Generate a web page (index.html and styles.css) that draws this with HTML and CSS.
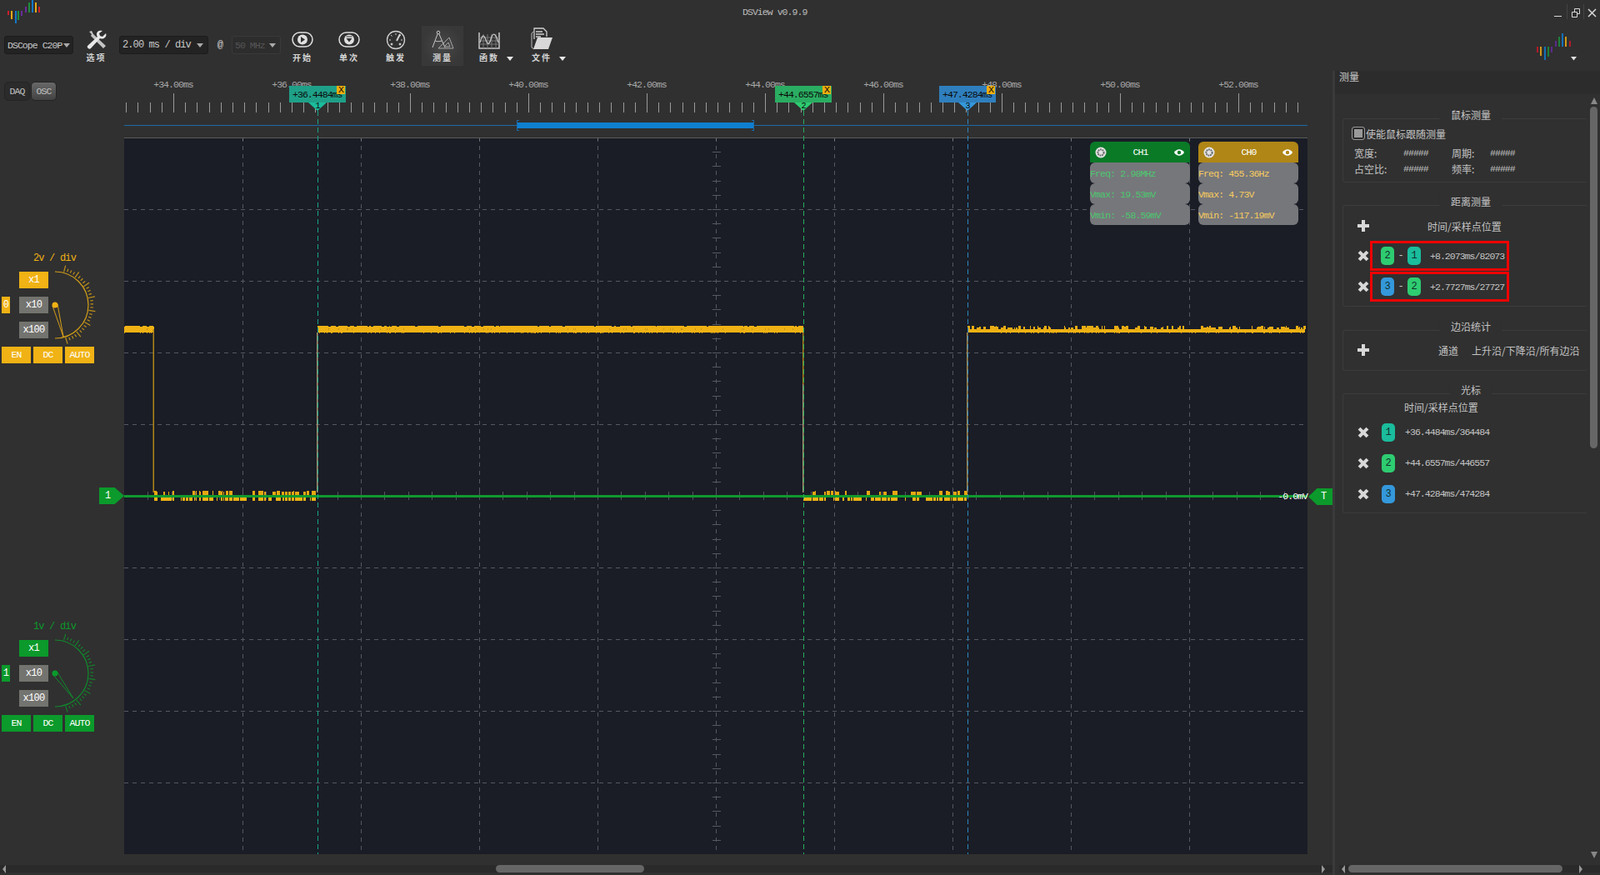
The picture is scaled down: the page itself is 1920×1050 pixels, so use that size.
FILE: index.html
```html
<!DOCTYPE html>
<html lang="zh-CN">
<head>
  <meta charset="UTF-8">
  <title>DSView v0.9.9</title>
  <link rel="stylesheet" href="styles.css">
</head>
<body>

  <div class="app">

    <!-- title bar -->
    <div class="titlebar">
      <svg class="logo-small" width="48" height="26" viewBox="0 0 48 26">
        <path stroke="#c8202c" d="M10 13v5M47 8v7"/><path stroke="#e8a818" d="M14 13v10M43 3v12"/>
        <path stroke="#1478c8" d="M19 13v15M39 0v15"/><path stroke="#1e8c3c" d="M22 13v11M35 3v12"/>
        <path stroke="#6a2c9c" d="M26 13v6M31 8v7"/>
      </svg>
      <div class="app-title">DSView v0.9.9</div>
      <div class="winbtns">
        <svg width="60" height="26" viewBox="0 0 60 26" fill="none" stroke="#d8d8d8">
          <path d="M5 19.5h9"/>
          <path stroke="#444" d="M20.5 5v18M40.5 5v18"/>
          <path d="M26.5 14.5h6v6h-6zM29.5 14v-3.500h6v6h-2.500"/>
          <path stroke-width="1.500" d="M46 11l9 9M55 11l-9 9"/>
        </svg>
      </div>
    </div>

    <!-- toolbar -->
    <div class="toolbar">
      <div class="combo combo-device">DSCope C20P<span class="caret"></span></div>

      <div class="tool tool-options">
        <svg width="26" height="24" viewBox="0 0 26 24">
          <path d="M4 2l3 3-1 2 15 15 3-3L9 5 7 1z" fill="#c4c4c4"/>
          <path d="M24 4l-4 4-3-1-1-3 4-3c-3-1-7 0-7 4 0 1 0 2 1 3L2 19c-1 2 2 5 4 3L17 10c4 2 9-2 7-6z" fill="#e8e8e8"/>
        </svg>
        <span class="tool-label">选项</span>
      </div>

      <div class="combo combo-time">2.00 ms / div<span class="caret"></span></div>
      <div class="at-sign">@</div>
      <div class="combo combo-rate">50 MHz<span class="caret"></span></div>

      <div class="tool tool-first">
        <svg width="26" height="24" viewBox="0 0 26 24" fill="none">
          <rect x="1" y="3" width="24" height="17" rx="8.500" stroke="#e0e0e0" stroke-width="1.500"/>
          <circle cx="13" cy="11.500" r="6" fill="#e0e0e0"/><path d="M11 8l5 3.500-5 3.500z" fill="#303030"/>
        </svg>
        <span class="tool-label">开始</span>
      </div>

      <div class="tool">
        <svg width="26" height="24" viewBox="0 0 26 24" fill="none">
          <rect x="1" y="3" width="24" height="17" rx="8.500" stroke="#e0e0e0" stroke-width="1.500"/>
          <circle cx="13" cy="11.500" r="6" fill="#e0e0e0"/><path d="M9.500 10h7l-3.500 4.500zM9.500 7.500h7v1h-7z" fill="#303030"/>
        </svg>
        <span class="tool-label">单次</span>
      </div>

      <div class="tool">
        <svg width="24" height="24" viewBox="0 0 24 24" fill="none" stroke="#d0d0d0">
          <circle cx="12" cy="12" r="10.500" stroke-width="1.300"/>
          <path d="M6 6l1.500 1.500M18 6l-3.500 3M4 12h2M20 12h-2M12 4v2"/>
          <path d="M17 5l-4 8" stroke-width="2"/><circle cx="7" cy="17" r="1" fill="#d0d0d0"/><circle cx="17" cy="17" r="1" fill="#d0d0d0"/>
        </svg>
        <span class="tool-label">触发</span>
      </div>

      <div class="tool tool-active">
        <svg width="28" height="24" viewBox="0 0 28 24" fill="none" stroke="#c8c8c8">
          <circle cx="9" cy="3" r="1.800"/>
          <path d="M8 5L2 21M10 5l7 16M5 13c2 1 5 1 8 0"/>
          <path d="M9 22L22 9l5 13z" stroke="#a8a8a8"/><path d="M16 20l5-5 2 5z" stroke="#a8a8a8"/>
        </svg>
        <span class="tool-label">测量</span>
      </div>

      <div class="tool">
        <svg width="26" height="22" viewBox="0 0 26 22" fill="none" stroke="#c8c8c8">
          <path d="M1 1v19h24V1" stroke-width="1.500"/>
          <path d="M1 7h24M1 11h24M1 15h24M6 3v17M11 3v17M16 3v17M21 3v17" stroke="#777"/>
          <path d="M2 13c3-11 5-9 7-3s4 6 6-1 5-10 9 4" stroke-width="1.300"/>
        </svg>
        <span class="tool-label tool-label-menu">函数<i class="caret caret-white"></i></span>
      </div>

      <div class="tool tool-file">
        <svg width="28" height="27" viewBox="0 0 28 27" fill="none">
          <path d="M5 14V1h11l4 4v6M7 5h8M7 8h10M7 11h6" stroke="#d0d0d0" stroke-width="1.300"/>
          <path d="M4 5L2 7v17l3 2" stroke="#bbb"/>
          <path d="M4 26l5-14h18l-5 14z" fill="#d8d8d8"/>
        </svg>
        <span class="tool-label tool-label-menu">文件<i class="caret caret-white"></i></span>
      </div>

      <svg class="logo-large" width="48" height="36" viewBox="1844 39 48 36" fill="none" stroke-width="2">
        <path stroke="#b01c28" d="M1845 56v7M1884 49v7"/><path stroke="#d09a18" d="M1849 56v11M1879 44v12"/>
        <path stroke="#1470b8" d="M1854 56v16M1875 40v16"/><path stroke="#1e8038" d="M1858 56v12M1871 44v12"/>
        <path stroke="#5c2a8c" d="M1862 56v7M1867 49v7"/>
        <path d="M1885 68h7l-3.500 4.500z" fill="#e0e0e0" stroke="none"/>
      </svg>
    </div>

    <div class="main">
      <div class="work">
        <div class="view">

          <!-- channel controls -->
          <div class="side">
            <div class="mode">
              <span class="mode-btn">DAQ</span>
              <span class="mode-btn mode-on">OSC</span>
            </div>

            <div class="chan chan-yellow">
              <div class="chan-scale">2v / div</div>
              <div class="chan-body">
                <span class="chan-tag">0</span>
                <div class="chan-gains">
                  <span class="gain gain-on">x1</span>
                  <span class="gain">x10</span>
                  <span class="gain">x100</span>
                </div>
                <svg class="dial" data-tip-x="10" data-tip-y="38" width="58" height="80" viewBox="0 0 58 80"></svg>
              </div>
              <div class="chan-modes">
                <span class="gain-on">EN</span><span class="gain-on">DC</span><span class="gain-on">AUTO</span>
              </div>
            </div>

            <div class="chan chan-green">
              <div class="chan-scale">1v / div</div>
              <div class="chan-body">
                <span class="chan-tag">1</span>
                <div class="chan-gains">
                  <span class="gain gain-on">x1</span>
                  <span class="gain">x10</span>
                  <span class="gain">x100</span>
                </div>
                <svg class="dial" data-tip-x="22" data-tip-y="30" width="58" height="80" viewBox="0 0 58 80"></svg>
              </div>
              <div class="chan-modes">
                <span class="gain-on">EN</span><span class="gain-on">DC</span><span class="gain-on">AUTO</span>
              </div>
            </div>
          </div>

          <!-- ruler and waveform -->
          <div class="scope">
            <div class="ruler">
              <span>+34.00ms</span><span>+36.00ms</span><span>+38.00ms</span><span>+40.00ms</span><span>+42.00ms</span>
              <span>+44.00ms</span><span>+46.00ms</span><span>+48.00ms</span><span>+50.00ms</span><span>+52.00ms</span>
            </div>
            <div class="canvas"></div>

            <svg id="plot" class="plot" width="1450" height="941" viewBox="149 84 1450 941"></svg>

            <div class="flag flag-1"><span class="flag-x">X</span>+36.4484ms<i class="flag-pin">1</i></div>
            <div class="flag flag-2"><span class="flag-x">X</span>+44.6557ms<i class="flag-pin">2</i></div>
            <div class="flag flag-3"><span class="flag-x">X</span>+47.4284ms<i class="flag-pin">3</i></div>

            <div class="cards">
              <div class="card card-green">
                <div class="card-head">
                  <svg width="14" height="14" viewBox="0 0 14 14"><circle cx="7" cy="7" r="6.500" fill="#e4e4e4"/><circle cx="7" cy="7" r="3.600" fill="none" stroke="#666" stroke-width="2" stroke-dasharray="1.800 .8"/></svg>
                  <b>CH1</b>
                  <svg width="12" height="8" viewBox="0 0 12 8"><path d="M0 4c3-5 9-5 12 0-3 5-9 5-12 0z" fill="#fff"/><circle cx="6" cy="4" r="2.200" fill="#0a7a27"/></svg>
                </div>
                <div class="card-row">Freq: 2.98MHz</div>
                <div class="card-row">Vmax: 19.53mV</div>
                <div class="card-row">Vmin: -58.59mV</div>
              </div>
              <div class="card card-gold">
                <div class="card-head">
                  <svg width="14" height="14" viewBox="0 0 14 14"><circle cx="7" cy="7" r="6.500" fill="#e4e4e4"/><circle cx="7" cy="7" r="3.600" fill="none" stroke="#666" stroke-width="2" stroke-dasharray="1.800 .8"/></svg>
                  <b>CH0</b>
                  <svg width="12" height="8" viewBox="0 0 12 8"><path d="M0 4c3-5 9-5 12 0-3 5-9 5-12 0z" fill="#fff"/><circle cx="6" cy="4" r="2.200" fill="#b08616"/></svg>
                </div>
                <div class="card-row">Freq: 455.36Hz</div>
                <div class="card-row">Vmax: 4.73V</div>
                <div class="card-row">Vmin: -117.19mV</div>
              </div>
            </div>

            <div class="level">-0.0mV</div>
            <div class="tag-left">1</div>
            <div class="tag-right">T</div>
          </div>
        </div>

        <div class="hscroll hscroll-main">
          <i class="arrow-left"></i><span class="thumb"></span><i class="arrow-right"></i>
        </div>
      </div>

      <!-- measure dock -->
      <div class="dock">
        <div class="dock-title">测量</div>
        <div class="dock-body">
          <div class="groups">

            <div class="group group-mouse">
              <div class="group-title">鼠标测量</div>
              <div class="check-row"><span class="check"></span>使能鼠标跟随测量</div>
              <div class="mouse-grid">
                <span>宽度:</span><span class="hash">#####</span><span>周期:</span><span class="hash">#####</span>
                <span>占空比:</span><span class="hash">#####</span><span>频率:</span><span class="hash">#####</span>
              </div>
            </div>

            <div class="group group-dist">
              <div class="group-title">距离测量</div>
              <div class="head-row"><span class="plus"></span><span class="head-dist">时间/采样点位置</span></div>
              <div class="dist-row">
                <span class="del"></span>
                <div class="dist">
                  <span class="chip chip-2">2</span><span class="minus">-</span><span class="chip chip-1">1</span>
                  <span class="val">+8.2073ms/82073</span>
                </div>
              </div>
              <div class="dist-row">
                <span class="del"></span>
                <div class="dist">
                  <span class="chip chip-3">3</span><span class="minus">-</span><span class="chip chip-2">2</span>
                  <span class="val">+2.7727ms/27727</span>
                </div>
              </div>
            </div>

            <div class="group group-edge">
              <div class="group-title">边沿统计</div>
              <div class="head-row"><span class="plus"></span><span class="head-edge">通道</span><span class="head-edge2">上升沿/下降沿/所有边沿</span></div>
            </div>

            <div class="group group-cursor">
              <div class="group-title">光标</div>
              <div class="head-cursor">时间/采样点位置</div>
              <div class="cursor-row"><span class="del"></span><span class="chip chip-1">1</span><span class="val">+36.4484ms/364484</span></div>
              <div class="cursor-row"><span class="del"></span><span class="chip chip-2">2</span><span class="val">+44.6557ms/446557</span></div>
              <div class="cursor-row"><span class="del"></span><span class="chip chip-3">3</span><span class="val">+47.4284ms/474284</span></div>
            </div>
          </div>

          <div class="vscroll">
            <i class="arrow-up"></i><span class="vthumb"></span><i class="arrow-down"></i>
          </div>
        </div>
        <div class="hscroll hscroll-dock">
          <i class="arrow-left"></i><span class="thumb"></span><i class="arrow-right"></i>
        </div>
      </div>
    </div>
  </div>

  <script src="script.js"></script>
</body>
</html>
```

FILE: styles.css
```css
* {
  margin: 0;
  padding: 0;
  box-sizing: border-box;
}

body {
  width: 1920px;
  height: 1050px;
  overflow: hidden;
  background-color: #303030;
  color: #c8c8c8;
  font-family: "Liberation Mono", "Noto Sans CJK SC", monospace;
  font-size: 11.5px;
  letter-spacing: -0.95px;
}

.app {
  display: flex;
  flex-direction: column;
  height: 1050px;
}

/* Title bar */
.titlebar {
  display: grid;
  grid-template-columns: 891px auto 1fr;
  height: 26px;
  align-items: center;
}

.logo-small {
  overflow: visible;
  fill: none;
  stroke-width: 2;
  align-self: start;
}

.app-title {
  color: #bdbdbd;
  margin-top: 2px;
}

.winbtns {
  display: flex;
  justify-content: flex-end;
}

/* Toolbar */
.toolbar {
  display: flex;
  align-items: center;
  height: 58px;
  padding-left: 5px;
  padding-right: 28px;
}

.combo {
  display: flex;
  align-items: center;
  justify-content: space-between;
  height: 22px;
  padding: 0 3px;
  background-color: #232323;
  border: 1px solid #1c1c1c;
  border-radius: 3px;
  margin-top: -2px;
  white-space: nowrap;
}

.combo-device { width: 83px; }
.combo-time { width: 107px; font-size: 12px; letter-spacing: -0.9px; padding-right: 5px; }
.combo-rate { width: 59px; background-color: #2d2d2d; border-color: #3a3a3a; color: #555; padding-right: 5px; }

.caret {
  display: inline-block;
  border-left: 4px solid transparent;
  border-right: 4px solid transparent;
  border-top: 5px solid #aaa;
}

.caret-white {
  position: absolute;
  left: 100%;
  top: 6px;
  margin-left: 9px;
  border-top-color: #e8e8e8;
}

.at-sign {
  width: 28px;
  text-align: center;
  font-size: 12px;
  margin-top: -2px;
}

.tool {
  display: flex;
  flex-direction: column;
  align-items: center;
  justify-content: flex-end;
  width: 56px;
  height: 48px;
  padding-bottom: 4px;
}

.tool-options { width: 55px; }
.tool-first { margin-left: -2px; }
.tool-file { width: 70px; }

.tool-active {
  width: 50px;
  margin: 0 3px;
  background: radial-gradient(circle, #484848 0%, #383838 70%);
}

.tool-label {
  font-family: "Noto Sans CJK SC", sans-serif;
  font-size: 10px;
  line-height: 13px;
  font-weight: 700;
  letter-spacing: 2px;
  margin-top: 2px;
  color: #d4d4d4;
  position: relative;
}

.logo-large {
  margin-left: auto;
  margin-top: 4px;
}

/* Main area */
.main {
  display: flex;
  flex: 1;
}

.work {
  width: 1599px;
  display: flex;
  flex-direction: column;
}

.view {
  display: flex;
  height: 941px;
}

/* Left side */
.side {
  width: 149px;
  padding-top: 14px;
}

.mode {
  display: flex;
  gap: 1px;
  padding-left: 5px;
  height: 23px;
  margin-bottom: 182px;
}

.mode-btn {
  width: 31px;
  line-height: 21px;
  text-align: center;
  background-color: #2b2b2b;
  border: 1px solid #242424;
  border-radius: 5px;
  color: #c0c0c0;
}

.mode-on {
  background: linear-gradient(#686868, #424242);
}

.chan {
  height: 133px;
  padding-left: 2px;
  margin-bottom: 309px;
}

.chan-yellow { color: #f0b214; }
.chan-green { color: #0b9a2b; }

.chan-scale {
  width: 127px;
  text-align: center;
  line-height: 14px;
  font-size: 12px;
  letter-spacing: -0.8px;
}

.chan-body {
  display: flex;
  align-items: center;
  margin-top: 9px;
  height: 80px;
}

.chan-tag {
  width: 10px;
  height: 20px;
  line-height: 20px;
  text-align: center;
  font-size: 12px;
  color: #fff;
}

.chan-yellow .chan-tag { background-color: #f0b214; }
.chan-green .chan-tag { background-color: #0b9a2b; }

.chan-gains {
  display: flex;
  flex-direction: column;
  gap: 10px;
  margin-left: 11px;
  width: 35px;
}

.gain {
  height: 20px;
  line-height: 20px;
  text-align: center;
  font-size: 12px;
  letter-spacing: -0.7px;
  background-color: #73736f;
  color: #fff;
}

.chan-yellow .gain-on { background-color: #f0b214; }
.chan-green .gain-on { background-color: #0b9a2b; }

.dial {
  overflow: visible;
  flex-shrink: 0;
}

.chan-modes {
  display: flex;
  gap: 3px;
  margin-top: 10px;
}

.chan-modes span {
  width: 35px;
  height: 20px;
  line-height: 20px;
  text-align: center;
  color: #fff;
}

/* Scope */
.scope {
  position: relative;
  width: 1450px;
  padding-right: 30px;
}

.ruler {
  display: flex;
  height: 81px;
  padding-top: 11px;
  margin-left: -12px;
  color: #a8a8a8;
  line-height: 14px;
}

.ruler span {
  width: 142px;
  text-align: center;
  flex-shrink: 0;
}

.canvas {
  height: 860px;
  background-color: #1a1d26;
}

.plot {
  position: absolute;
  left: 0;
  top: 0;
}

/* Cursor flags */
.flag {
  position: absolute;
  top: 19px;
  width: 68px;
  height: 20px;
  line-height: 21px;
  padding-left: 4px;
  color: #0a0a0a;
  white-space: nowrap;
}

.flag-1 { left: 198px; background-color: #1fa088; --pin: #1abc9c; }
.flag-2 { left: 781px; background-color: #2aad62; --pin: #2ecc71; }
.flag-3 { left: 978px; background-color: #2f7fbe; --pin: #3498db; }

.flag-x {
  position: absolute;
  right: 1px;
  top: 0;
  width: 10px;
  height: 10px;
  line-height: 10px;
  text-align: center;
  background-color: #f0ae10;
}

.flag-pin {
  position: absolute;
  top: 20px;
  left: 23px;
  width: 22px;
  height: 10px;
  line-height: 9px;
  text-align: center;
  font-style: normal;
  font-size: 10px;
  background-color: var(--pin);
  clip-path: polygon(0 0, 100% 0, 50% 100%);
}

/* Channel cards */
.cards {
  position: absolute;
  top: 86px;
  left: 1159px;
  display: flex;
  gap: 10px;
}

.card {
  width: 120px;
}

.card-head {
  display: flex;
  align-items: center;
  justify-content: space-between;
  height: 25px;
  padding: 0 7px 0 6px;
  border-radius: 6px 6px 0 0;
  color: #fff;
}

.card-head b {
  font-weight: 400;
}

.card-green .card-head { background-color: #0a7a27; }
.card-gold .card-head { background-color: #b08616; }

.card-row {
  height: 25px;
  line-height: 27px;
  background-color: #76777b;
  border-radius: 6px;
  letter-spacing: -0.85px;
}

.card-green .card-row { color: #4cc76f; }
.card-gold .card-row { color: #f7cc5e; }

.level {
  position: absolute;
  top: 505px;
  right: 30px;
  line-height: 14px;
  color: #fff;
}

.tag-left {
  position: absolute;
  left: -30px;
  top: 501px;
  width: 30px;
  height: 20px;
  line-height: 20px;
  padding-left: 7px;
  font-size: 12px;
  color: #fff;
  background-color: #0b9a2b;
  clip-path: polygon(0 0, 62% 0, 100% 50%, 62% 100%, 0 100%);
}

.tag-right {
  position: absolute;
  left: 1421px;
  top: 502px;
  width: 29px;
  height: 20px;
  line-height: 20px;
  padding-left: 15px;
  font-size: 12px;
  color: #fff;
  background-color: #0b9a2b;
  clip-path: polygon(0 50%, 36% 0, 100% 0, 100% 100%, 36% 100%);
}

/* Scrollbars */
.hscroll {
  display: flex;
  align-items: center;
  height: 9px;
  background-color: #2a2a2a;
}

.hscroll-main {
  margin-top: 13px;
  padding: 0 9px 0 3px;
}

.hscroll-main .thumb {
  width: 178px;
  margin-left: 588px;
}

.hscroll-dock {
  margin-left: 5px;
  padding: 0 21px 0 3px;
}

.hscroll-dock .thumb {
  width: 257px;
  margin-left: 4px;
}

.thumb {
  height: 9px;
  background-color: #666;
  border-radius: 5px;
}

.arrow-left, .arrow-right {
  width: 0;
  height: 0;
  border-top: 5px solid transparent;
  border-bottom: 5px solid transparent;
}

.arrow-left { border-right: 4px solid #999; }
.arrow-right { border-left: 4px solid #999; margin-left: auto; }

/* Dock */
.dock {
  width: 321px;
  display: flex;
  flex-direction: column;
  border-left: 3px solid #3a3a3a;
  margin-top: 1px;
}

.dock-title {
  height: 28px;
  padding-left: 5px;
  background-color: #2c2c2c;
  font-family: "Noto Sans CJK SC", sans-serif;
  font-size: 12px;
  line-height: 14px;
  letter-spacing: 0;
}

.dock-body {
  display: flex;
  height: 925px;
}

.groups {
  width: 303px;
  padding: 29px 0 0 9px;
  font-family: "Noto Sans CJK SC", sans-serif;
  font-size: 12px;
  letter-spacing: 0;
  color: #c4c4c4;
}

.group {
  position: relative;
  width: 294px;
  border: 1px solid #3c3c3c;
  border-right: 0;
  border-radius: 3px;
  margin-bottom: 27px;
}

.group-mouse { height: 77px; }
.group-dist { height: 122px; padding-top: 12px; }
.group-edge { height: 49px; padding-top: 11px; margin-top: 28px; }
.group-cursor { height: 144px; }

.group-title {
  position: absolute;
  top: -14px;
  left: 153px;
  transform: translateX(-50%);
  padding: 0 13px;
  line-height: 18px;
  background-color: #303030;
  white-space: nowrap;
}

.check-row {
  display: flex;
  align-items: center;
  height: 16px;
  margin: 9px 0 0 10px;
  gap: 1px;
}

.check {
  width: 16px;
  height: 16px;
  border: 1px solid #999;
  border-radius: 3px;
  background-color: #2a2a2a;
  box-shadow: inset 0 0 0 2px #2a2a2a, inset 0 0 0 8px #999;
}

.mouse-grid {
  display: grid;
  grid-template-columns: 59px 58px 46px auto;
  grid-auto-rows: 19px;
  align-items: center;
  padding-left: 13px;
  margin-top: 6px;
}

.hash {
  font-family: "Liberation Mono", monospace;
  font-size: 11.5px;
  letter-spacing: -0.95px;
}

.head-row {
  display: flex;
  align-items: center;
  height: 24px;
}

.plus {
  position: relative;
  width: 14px;
  height: 14px;
  margin-left: 17px;
  background:
    linear-gradient(#d8d8d8, #d8d8d8) center / 14px 4px no-repeat,
    linear-gradient(#d8d8d8, #d8d8d8) center / 4px 14px no-repeat;
}

.del {
  display: block;
  width: 14px;
  height: 14px;
  margin-left: 17px;
  flex-shrink: 0;
  transform: rotate(45deg);
  background:
    linear-gradient(#d8d8d8, #d8d8d8) center / 15px 4px no-repeat,
    linear-gradient(#d8d8d8, #d8d8d8) center / 4px 15px no-repeat;
}

.head-dist {
  margin-left: 70px;
}

.head-edge {
  margin-left: 83px;
}

.head-edge2 {
  margin-left: 16px;
  white-space: nowrap;
}

.dist-row {
  display: flex;
  align-items: center;
  height: 36px;
  margin-bottom: 1px;
}

.group-dist .head-row {
  margin-bottom: 6px;
}

.dist {
  display: flex;
  align-items: center;
  width: 167px;
  height: 36px;
  margin-left: 1px;
  padding-left: 10px;
  border: 3px solid #f00000;
}

.chip {
  flex-shrink: 0;
  width: 16px;
  height: 22px;
  line-height: 22px;
  text-align: center;
  border-radius: 5px;
  font-family: "Liberation Mono", monospace;
  font-size: 12px;
  color: #10302a;
}

.chip-1 { background-color: #1abc9c; }
.chip-2 { background-color: #2ecc71; }
.chip-3 { background-color: #3498db; }

.minus {
  width: 16px;
  text-align: center;
  font-family: "Liberation Mono", monospace;
}

.val {
  margin-left: 11px;
  font-family: "Liberation Mono", monospace;
  font-size: 11.5px;
  letter-spacing: -0.95px;
  white-space: nowrap;
}

.head-cursor {
  height: 18px;
  line-height: 18px;
  margin: 7px 0 0 73px;
}

.cursor-row {
  display: flex;
  align-items: center;
  height: 37px;
}

.cursor-row:nth-child(3) {
  margin-top: 2px;
}

.cursor-row .chip {
  margin-left: 15px;
}

.cursor-row .val {
  margin-left: 12px;
}

.vscroll {
  display: flex;
  flex-direction: column;
  align-items: center;
  width: 9px;
  margin-left: 3px;
  padding: 4px 0 8px;
}

.arrow-up, .arrow-down {
  width: 0;
  height: 0;
  border-left: 4px solid transparent;
  border-right: 4px solid transparent;
}

.arrow-up { border-bottom: 8px solid #888; }
.arrow-down { border-top: 8px solid #888; margin-top: auto; }

.vthumb {
  width: 9px;
  height: 410px;
  margin-top: 3px;
  background-color: #666;
  border-radius: 5px;
}
```

FILE: script.js
```js
// plot uses page coordinates through its viewBox
var LEFT = 149, RIGHT = 1569, TOP = 165, BOTTOM = 1025;
var seed = 7;

function rnd() {
  seed = (seed * 16807) % 2147483647;
  return seed / 2147483647;
}

function line(x1, y1, x2, y2, color, extra) {
  return '<line x1="' + x1 + '" y1="' + y1 + '" x2="' + x2 + '" y2="' + y2 + '" stroke="' + color + '" ' + (extra || '') + '/>';
}

function rect(x, y, w, h, color) {
  return '<rect x="' + x + '" y="' + y + '" width="' + w + '" height="' + h + '" fill="' + color + '"/>';
}

var out = '';
var crisp = 'shape-rendering="crispEdges"';
var gridDash = 'stroke-dasharray="5 5" ' + crisp;

// ruler ticks
for (var i = 0; i < 100; i++) {
  var tx = Math.round(151.2 + i * 14.2) + 0.5;
  if (tx > 1558) break;
  out += line(tx, (i - 4) % 10 === 0 ? 112 : 123, tx, 135, '#9a9a9a', crisp);
}

// overview bar
out += line(LEFT, 150.5, RIGHT, 150.5, '#1c6ba6', crisp);
out += rect(620, 147, 285, 7, '#0f7fd0');
out += '<path d="M623 144.500h-2.500v12h2.500M902 144.500h2.500v12h-2.500" fill="none" stroke="#1c6ba6" ' + crisp + '/>';

// grid
for (i = 1; i < 10; i++) {
  var gx = Math.round(LEFT + i * 142) + 0.5;
  var gy = TOP + i * 86 + 0.5;
  out += line(gx, TOP, gx, BOTTOM, '#555861', gridDash);
  out += line(LEFT, gy, RIGHT, gy, '#555861', gridDash);
  out += line(gx, TOP, gx, TOP + 4, '#777', crisp);
}
out += line(LEFT, TOP + 0.5, RIGHT, TOP + 0.5, '#5a5a5a', crisp);
out += line(LEFT - 0.5, TOP, LEFT - 0.5, BOTTOM, '#5a5a5a', crisp);

// centre cross ticks
for (i = 1; i < 50; i++) {
  var cx = Math.round(LEFT + i * 28.4) + 0.5;
  var cy = Math.round(TOP + i * 17.2) + 0.5;
  out += line(cx, 590, cx, 600, '#555861', crisp);
  out += line(855, cy, 865, cy, '#555861', crisp);
}

// channel 0 high level
function high(x1, x2, solid) {
  out += rect(x1, solid ? 392 : 395, x2 - x1, solid ? 7 : 4, '#f0b214');
  for (var x = x1; x < x2;) {
    var w = 1 + Math.floor(rnd() * 3);
    if (solid) {
      if (rnd() < 0.85) out += rect(x, 391, w, 1, '#f0b214');
      if (rnd() < 0.12) out += rect(x, 394, 1, 2, '#c8941a');
      if (rnd() < 0.4) out += rect(x, 399, 1, 1, '#d89f14');
    } else {
      if (rnd() < 0.6) out += rect(x, 391 + Math.floor(rnd() * 3), w, 4, '#e8ac14');
      if (rnd() < 0.3) out += rect(x, 399, 1, 1, '#d89f14');
    }
    x += w;
  }
}

// channel 0 low level, mostly hidden by channel 1
function low(x1, x2) {
  for (var x = x1; x < x2;) {
    var w = 1 + Math.floor(rnd() * 4);
    if (rnd() < 0.45) out += rect(x, 589 + Math.floor(rnd() * 2), w, 6, '#e6a812');
    if (rnd() < 0.8) out += rect(x, 596, w, 5, '#f0b214');
    x += w + Math.floor(rnd() * 2);
  }
}

high(149, 185, true);
high(381, 964, true);
high(1161, 1195, false);
high(1195, 1566, false);
low(185, 381);
low(964, 1161);

// edges
out += rect(183.5, 395, 1.5, 196, '#b08418');
out += rect(380, 399, 1.5, 192, '#a89870');
out += rect(963, 399, 1.5, 62, '#a87e18');
out += rect(963, 461, 1.5, 130, '#a89870');
out += rect(1160, 399, 1.5, 192, '#a88e50');

// channel 1
out += rect(LEFT, 594, RIGHT - LEFT, 3, '#0f9a2e');

// cursors
out += line(381.5, 133, 381.5, BOTTOM, '#17a589', 'stroke-dasharray="6 4" ' + crisp);
out += line(964.5, 133, 964.5, BOTTOM, '#27ae60', 'stroke-dasharray="6 4" ' + crisp);
out += line(1161.5, 133, 1161.5, BOTTOM, '#2e86c1', 'stroke-dasharray="6 4" ' + crisp);

document.getElementById('plot').innerHTML = out;

// dials, centre of the arc is at 8,40 in each svg
var dials = document.querySelectorAll('.dial');
for (i = 0; i < dials.length; i++) {
  var d = dials[i];
  var tipX = +d.getAttribute('data-tip-x');
  var tipY = +d.getAttribute('data-tip-y');
  var s = '<path d="M8 0A40 40 0 0 1 8 80" fill="none" stroke="currentColor" stroke-width="1.2" opacity=".85"/>';
  for (var a = -75; a <= 75; a += 5.25) {
    var big = Math.round((a + 75) / 5.25) % 4 === 0;
    var r1 = big ? 41 : 42.5;
    var r2 = big ? 49 : 46;
    var rad = a * Math.PI / 180;
    s += line((8 + r1 * Math.cos(rad)).toFixed(1), (40 + r1 * Math.sin(rad)).toFixed(1),
      (8 + r2 * Math.cos(rad)).toFixed(1), (40 + r2 * Math.sin(rad)).toFixed(1), 'currentColor', 'stroke-width="1.2" opacity=".75"');
  }
  s += '<circle cx="8" cy="40" r="3.5" fill="currentColor"/>';
  s += '<path d="M5 41L' + (8 + tipX) + ' ' + (40 + tipY) + 'L11 39" fill="none" stroke="currentColor" opacity=".85"/>';
  d.innerHTML = s;
}
```
